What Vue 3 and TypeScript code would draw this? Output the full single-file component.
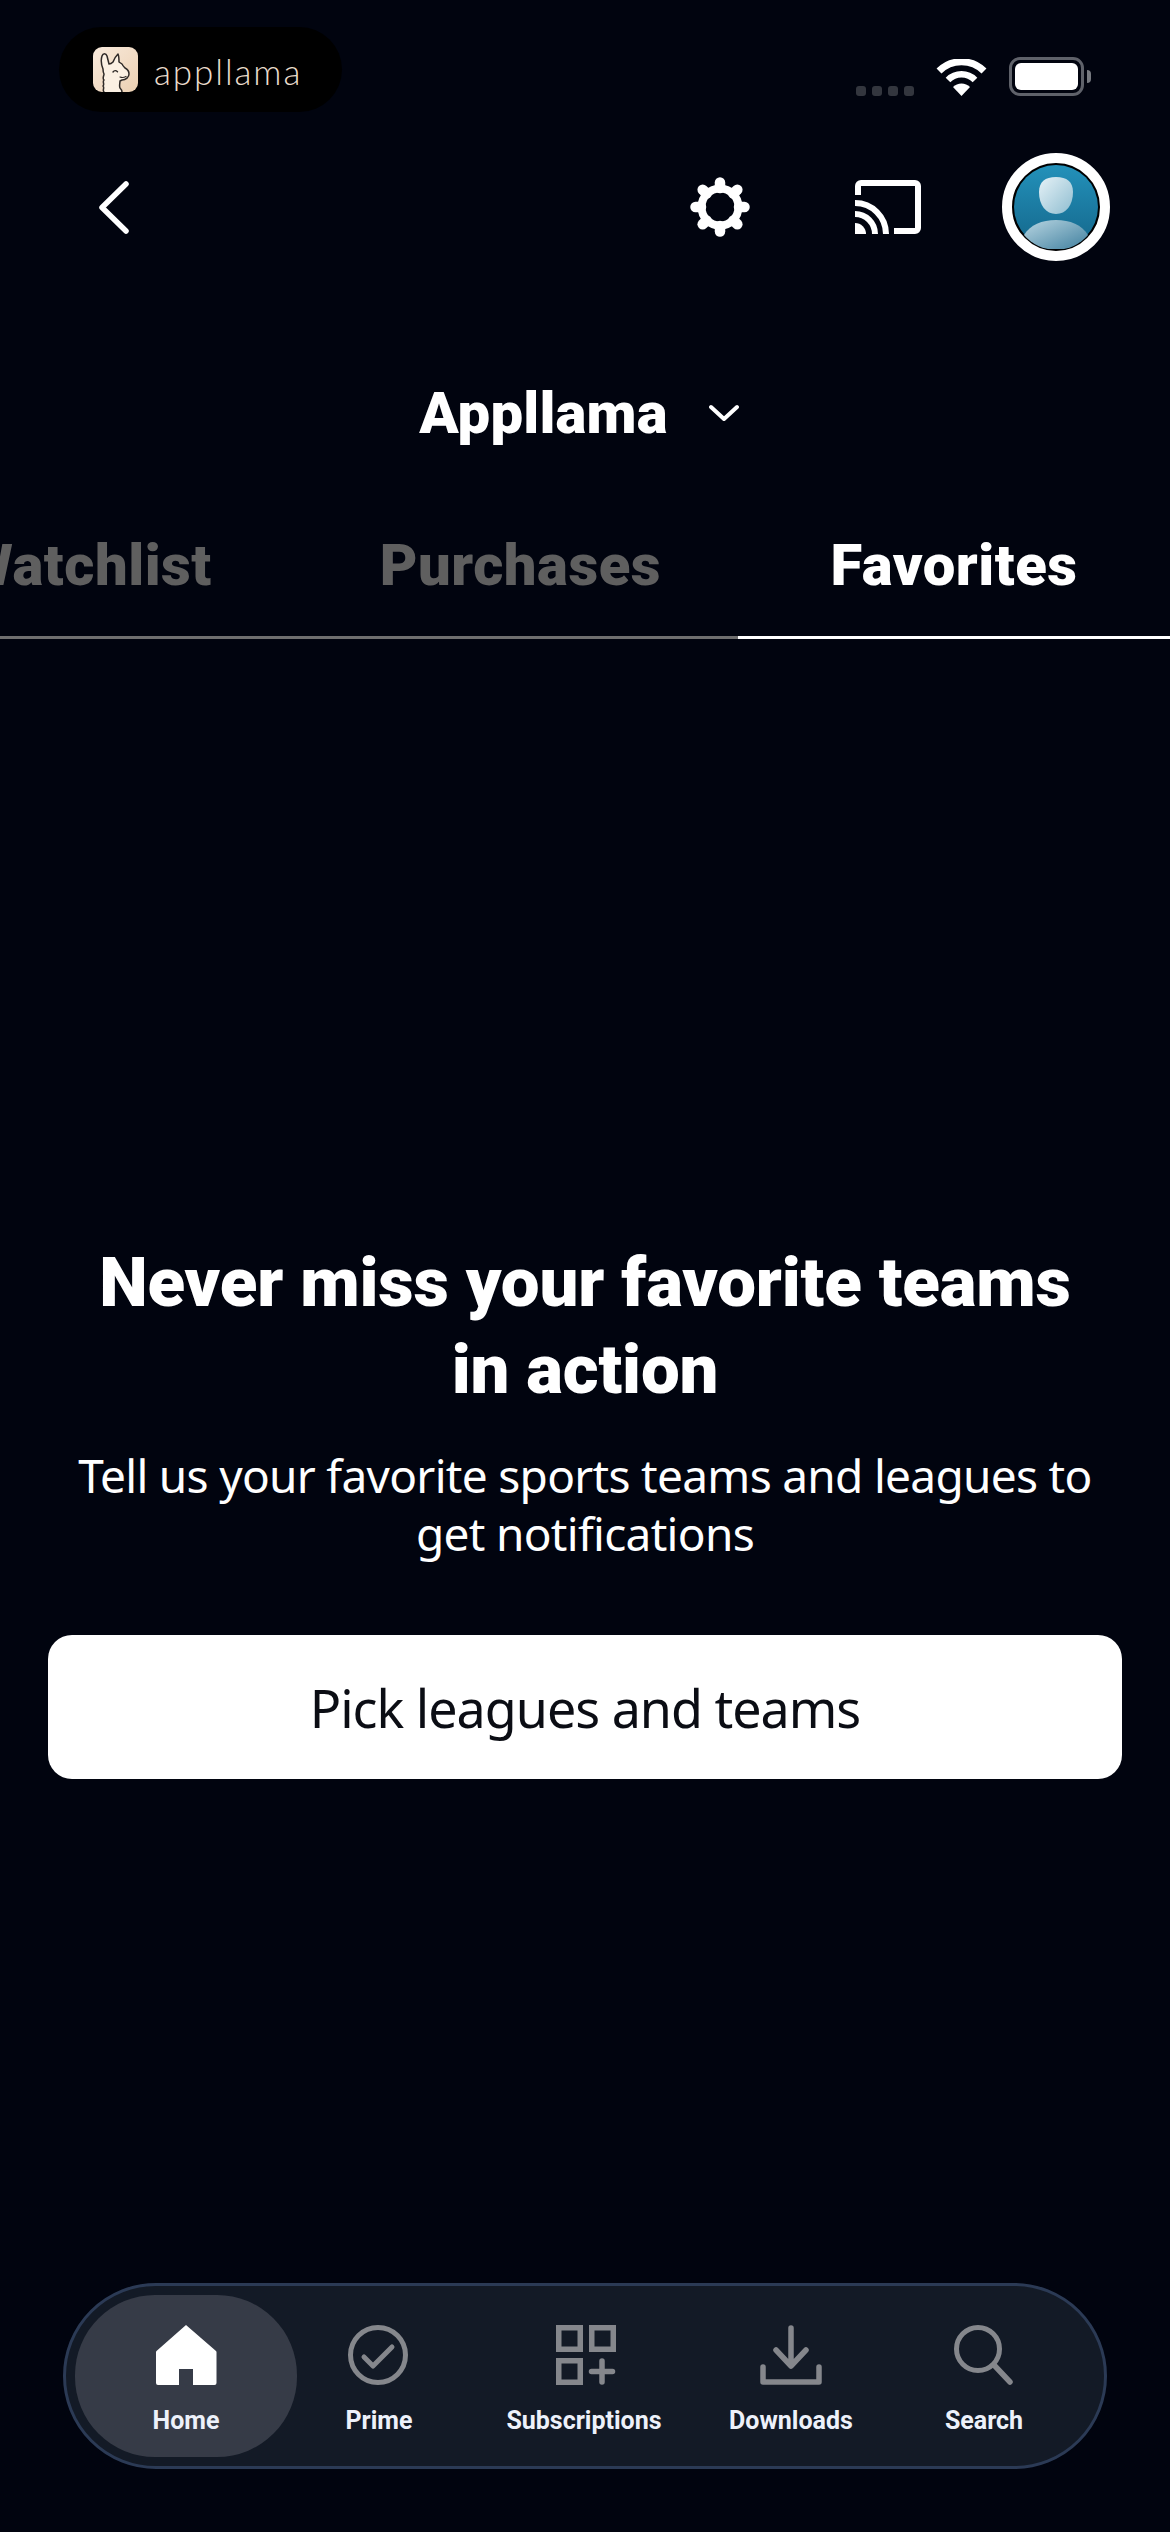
<script setup lang="ts">
const tabs = [
  { name: 'Watchlist', cls: 'tab-watch' },
  { name: 'Purchases', cls: 'tab-purchases' },
  { name: 'Favorites', cls: 'tab-active' },
]
const navItems = [
  { name: 'Home', icon: 'home', cls: 'nav-home' },
  { name: 'Prime', icon: 'prime', cls: 'nav-prime' },
  { name: 'Subscriptions', icon: 'subs', cls: 'nav-subs' },
  { name: 'Downloads', icon: 'down', cls: 'nav-down' },
  { name: 'Search', icon: 'search', cls: 'nav-search' },
]
const gearTeeth = [0, 45, 90, 135, 180, 225, 270, 315]
</script>

<template>
  <div class="page">
    <div class="status">
      <div class="brand">
        <svg class="llama" width="45" height="45" viewBox="0 0 45 45">
          <defs>
            <linearGradient id="tile" x1="0" y1="0" x2="1" y2="1">
              <stop offset="0" stop-color="#f8eadc" />
              <stop offset="1" stop-color="#ecd0b2" />
            </linearGradient>
          </defs>
          <rect width="45" height="45" rx="9" fill="url(#tile)" />
          <path d="M11 45c-2-2 1-4-1-6 2-2-1-4 1-6-2-2 0-4 0-6-1-2-1-3-1-5-2-5-2-10-1-13 1-3 4-3 5 0l2 8c2 0 3-1 4-2 1-3 3-6 5-8 1 2 1 5 1 8l3 2c1 2 2 3 3 4 2 1 4 3 4 6 0 3-3 6-7 6l-2 1c0 2-1 5 0 7 1 1 2 2 2 4" fill="#fbf0e3" stroke="#2f2a28" stroke-width="1.500" stroke-linejoin="round" stroke-linecap="round" />
          <path d="M20 25c1.300-1.800 3-1.800 4.500-.2" fill="none" stroke="#2f2a28" stroke-width="1.400" stroke-linecap="round" />
          <path d="M27 30c2 .8 4 .6 6-.5" fill="none" stroke="#2f2a28" stroke-width="1.200" stroke-linecap="round" />
        </svg>
        <span class="wordmark">appllama</span>
      </div>
      <div class="indicators">
        <div class="dots"><i></i><i></i><i></i><i></i></div>
        <svg width="51" height="37" viewBox="0 0 51 37">
          <path d="M3 12a32 32 0 0 1 45 0" fill="none" stroke="#fff" stroke-width="7" />
          <path d="M12 21a19 19 0 0 1 27 0" fill="none" stroke="#fff" stroke-width="6.500" />
          <path d="M25.500 37 17 28a12 12 0 0 1 17 0z" fill="#fff" />
        </svg>
        <div class="battery"><div class="battery-fill"></div></div>
      </div>
    </div>

    <div class="toolbar">
      <svg class="back" width="30" height="53" viewBox="0 0 30 53">
        <path d="M27 3 3 26.500 27 50" fill="none" stroke="#fff" stroke-width="5.500" stroke-linecap="round" stroke-linejoin="round" />
      </svg>
      <svg class="gear" width="60" height="60" viewBox="0 0 60 60">
        <circle cx="30" cy="30" r="18.500" fill="none" stroke="#fff" stroke-width="8" />
        <line
          v-for="a in gearTeeth"
          :key="a"
          x1="30"
          y1="11"
          x2="30"
          y2="5.500"
          stroke="#fff"
          stroke-width="10.500"
          stroke-linecap="round"
          :transform="`rotate(${a} 30 30)`"
        />
      </svg>
      <svg class="cast" width="66" height="54" viewBox="0 0 66 54">
        <path d="M3 15V6a3 3 0 0 1 3-3h54a3 3 0 0 1 3 3v42a3 3 0 0 1-3 3H39" fill="none" stroke="#fff" stroke-width="6" />
        <path d="M0 23a31 31 0 0 1 31 31" fill="none" stroke="#fff" stroke-width="6" />
        <path d="M0 34a20 20 0 0 1 20 20" fill="none" stroke="#fff" stroke-width="6" />
        <path d="M0 43a11 11 0 0 1 11 11H0z" fill="#fff" />
      </svg>
      <div class="avatar">
        <svg width="84" height="84" viewBox="0 0 84 84">
          <defs>
            <linearGradient id="head" x1="0" y1="0" x2="1" y2="1">
              <stop offset="0" stop-color="#e6f2f7" />
              <stop offset="1" stop-color="#8fbdd0" />
            </linearGradient>
            <linearGradient id="torso" x1="0" y1="0" x2="1" y2="1">
              <stop offset="0" stop-color="#b9d6e2" />
              <stop offset="1" stop-color="#3f7f9e" />
            </linearGradient>
            <linearGradient id="sky" x1="0" y1="0" x2="0" y2="1">
              <stop offset="0" stop-color="#2391ba" />
              <stop offset="1" stop-color="#14668a" />
            </linearGradient>
          </defs>
          <circle cx="42" cy="42" r="42" fill="url(#sky)" />
          <path d="M42 12c11 0 17 5 17 15 0 13-7 22-17 22S25 40 25 27c0-10 6-15 17-15z" fill="url(#head)" />
          <path d="M10 70c6-10 18-15 32-15s26 5 32 15a42 42 0 0 1-64 0z" fill="url(#torso)" />
        </svg>
      </div>
    </div>

    <div class="account">
      <span class="account-name">Appllama</span>
      <svg width="30" height="18" viewBox="0 0 30 18">
        <path d="M2 3l13 12L28 3" fill="none" stroke="#fff" stroke-width="4" stroke-linecap="round" stroke-linejoin="round" />
      </svg>
    </div>

    <div class="tabs">
      <div v-for="t in tabs" :key="t.name" class="tab" :class="t.cls">{{ t.name }}</div>
    </div>

    <div class="empty">
      <h1 class="empty-title">Never miss your favorite teams<br />in action</h1>
      <p class="empty-text">Tell us your favorite sports teams and leagues to<br />get notifications</p>
      <button class="pick">Pick leagues and teams</button>
    </div>

    <nav class="nav">
      <div v-for="n in navItems" :key="n.name" class="nav-item" :class="n.cls">
        <svg width="64" height="60" viewBox="0 0 64 60" class="nav-icon">
          <template v-if="n.icon === 'home'">
            <path d="M32 0 62 26a2 2 0 0 1 .5 1V58a2 2 0 0 1-2 2H39V44H25V60H4a2 2 0 0 1-2-2V27a2 2 0 0 1 .5-1z" fill="#fff" />
          </template>
          <template v-else-if="n.icon === 'prime'">
            <circle cx="31" cy="30" r="27.500" fill="none" stroke="#85878c" stroke-width="5" />
            <path d="M17 32l9 9 19-19" fill="none" stroke="#85878c" stroke-width="5" stroke-linecap="round" stroke-linejoin="round" />
          </template>
          <template v-else-if="n.icon === 'subs'">
            <g fill="none" stroke="#85878c" stroke-width="5.500">
              <rect x="6.750" y="2.750" width="21.500" height="21.500" />
              <rect x="39.750" y="2.750" width="21.500" height="21.500" />
              <rect x="6.750" y="35.750" width="21.500" height="21.500" />
              <path d="M50 36v21M39.500 46.500h21" stroke-linecap="round" />
            </g>
          </template>
          <template v-else-if="n.icon === 'down'">
            <path d="M32 3v38M17 25l15 16 15-16" fill="none" stroke="#85878c" stroke-width="5.500" stroke-linecap="round" stroke-linejoin="round" />
            <path d="M4 42v15h56V42" fill="none" stroke="#85878c" stroke-width="5.500" stroke-linecap="round" stroke-linejoin="round" />
          </template>
          <template v-else>
            <circle cx="26" cy="24" r="21.500" fill="none" stroke="#85878c" stroke-width="5" />
            <path d="M42 40l16 17" fill="none" stroke="#85878c" stroke-width="5.500" stroke-linecap="round" />
          </template>
        </svg>
        <span class="nav-label">{{ n.name }}</span>
      </div>
    </nav>
  </div>
</template>

<style>
html,
body {
  margin: 0;
  background: #01040f;
}
</style>

<style scoped>
.page {
  width: 1170px;
  height: 2532px;
  background: #01040f;
  color: #fff;
  font-family: Roboto, "Noto Sans", sans-serif;
  display: flex;
  flex-direction: column;
  overflow: hidden;
}
.status {
  display: flex;
  justify-content: space-between;
  padding: 27px 86px 0 59px;
  height: 85px;
}
.brand {
  width: 283px;
  height: 85px;
  box-sizing: border-box;
  background: #000;
  border-radius: 43px;
  display: flex;
  align-items: center;
  padding-left: 34px;
  gap: 16px;
}
.wordmark {
  font-family: Lato, sans-serif;
  font-weight: 300;
  font-size: 35px;
  color: #e9dccc;
  letter-spacing: 1.9px;
  position: relative;
  top: 1px;
}
.indicators {
  display: flex;
  align-items: flex-end;
  height: 69px;
}
.dots {
  display: flex;
  gap: 6px;
  margin-right: 22px;
}
.dots i {
  width: 10px;
  height: 10px;
  border-radius: 3px;
  background: #33363e;
}
.battery {
  width: 75px;
  height: 39px;
  box-sizing: border-box;
  margin-left: 22px;
  border: 3px solid #5f626a;
  border-radius: 11px;
  padding: 3px;
  position: relative;
}
.battery::after {
  content: "";
  position: absolute;
  right: -10px;
  top: 10px;
  width: 4px;
  height: 13px;
  border-radius: 0 4px 4px 0;
  background: #777a80;
}
.battery-fill {
  width: 100%;
  height: 100%;
  background: #fff;
  border-radius: 6px;
}
.toolbar {
  display: flex;
  align-items: center;
  margin-top: 41px;
  height: 108px;
  padding-left: 99px;
}
.gear {
  margin-left: 561px;
}
.cast {
  margin-left: 105px;
}
.avatar {
  margin-left: 81px;
  width: 108px;
  height: 108px;
  box-sizing: border-box;
  border-radius: 50%;
  background: #000;
  border: 10px solid #fff;
  display: flex;
  align-items: center;
  justify-content: center;
}
.avatar svg {
  display: block;
}
.account {
  display: flex;
  justify-content: center;
  align-items: center;
  margin-top: 122px;
  height: 60px;
  gap: 41px;
  padding-right: 12px;
}
.account-name {
  font-size: 58px;
  font-weight: 900;
  letter-spacing: 0.2px;
  line-height: 60px;
}
.tabs {
  display: flex;
  justify-content: flex-end;
  margin-top: 72px;
  height: 121px;
  border-bottom: 3px solid #6f6f6f;
}
.tab {
  flex-shrink: 0;
  font-size: 58px;
  font-weight: 900;
  letter-spacing: 0.5px;
  line-height: 100px;
  color: #5f5f5f;
  height: 121px;
  box-sizing: border-box;
}
.tab-watch {
  padding-right: 84px;
}
.tab-purchases {
  padding: 0 77px 0 84px;
}
.tab-active {
  color: #fff;
  width: 432px;
  text-align: center;
  height: 124px;
  border-bottom: 3px solid #fff;
}
.empty {
  display: flex;
  flex-direction: column;
  align-items: center;
  padding-top: 600px;
}
.empty-title {
  margin: 0;
  font-size: 69px;
  font-weight: 900;
  letter-spacing: -0.15px;
  line-height: 87px;
  text-align: center;
}
.empty-text {
  margin: 33px 0 0;
  font-family: "Noto Sans", sans-serif;
  font-size: 46px;
  letter-spacing: -0.7px;
  line-height: 58px;
  text-align: center;
}
.pick {
  margin-top: 73px;
  width: 1074px;
  height: 144px;
  border: 0;
  border-radius: 24px;
  background: #fff;
  color: #0b0d14;
  font-family: "Noto Sans", sans-serif;
  font-size: 52px;
  letter-spacing: -1px;
}
.nav {
  margin: auto 0 63px 63px;
  width: 1044px;
  height: 186px;
  box-sizing: border-box;
  background: #131a26;
  border: 3px solid #2b3a55;
  border-radius: 93px;
  display: flex;
  align-items: stretch;
  padding: 9px 0;
}
.nav-item {
  display: flex;
  flex-direction: column;
  align-items: center;
  padding-top: 30px;
  box-sizing: border-box;
  border-radius: 80px;
}
.nav-icon {
  display: block;
}
.nav-label {
  font-size: 25px;
  font-weight: 700;
  line-height: 30px;
  margin-top: 21px;
  color: #edf1fa;
  white-space: nowrap;
}
.nav-home {
  width: 222px;
  margin-left: 9px;
  background: #363b47;
}
.nav-prime {
  width: 164px;
}
.nav-subs {
  width: 246px;
}
.nav-down {
  width: 168px;
}
.nav-search {
  width: 218px;
}
</style>
